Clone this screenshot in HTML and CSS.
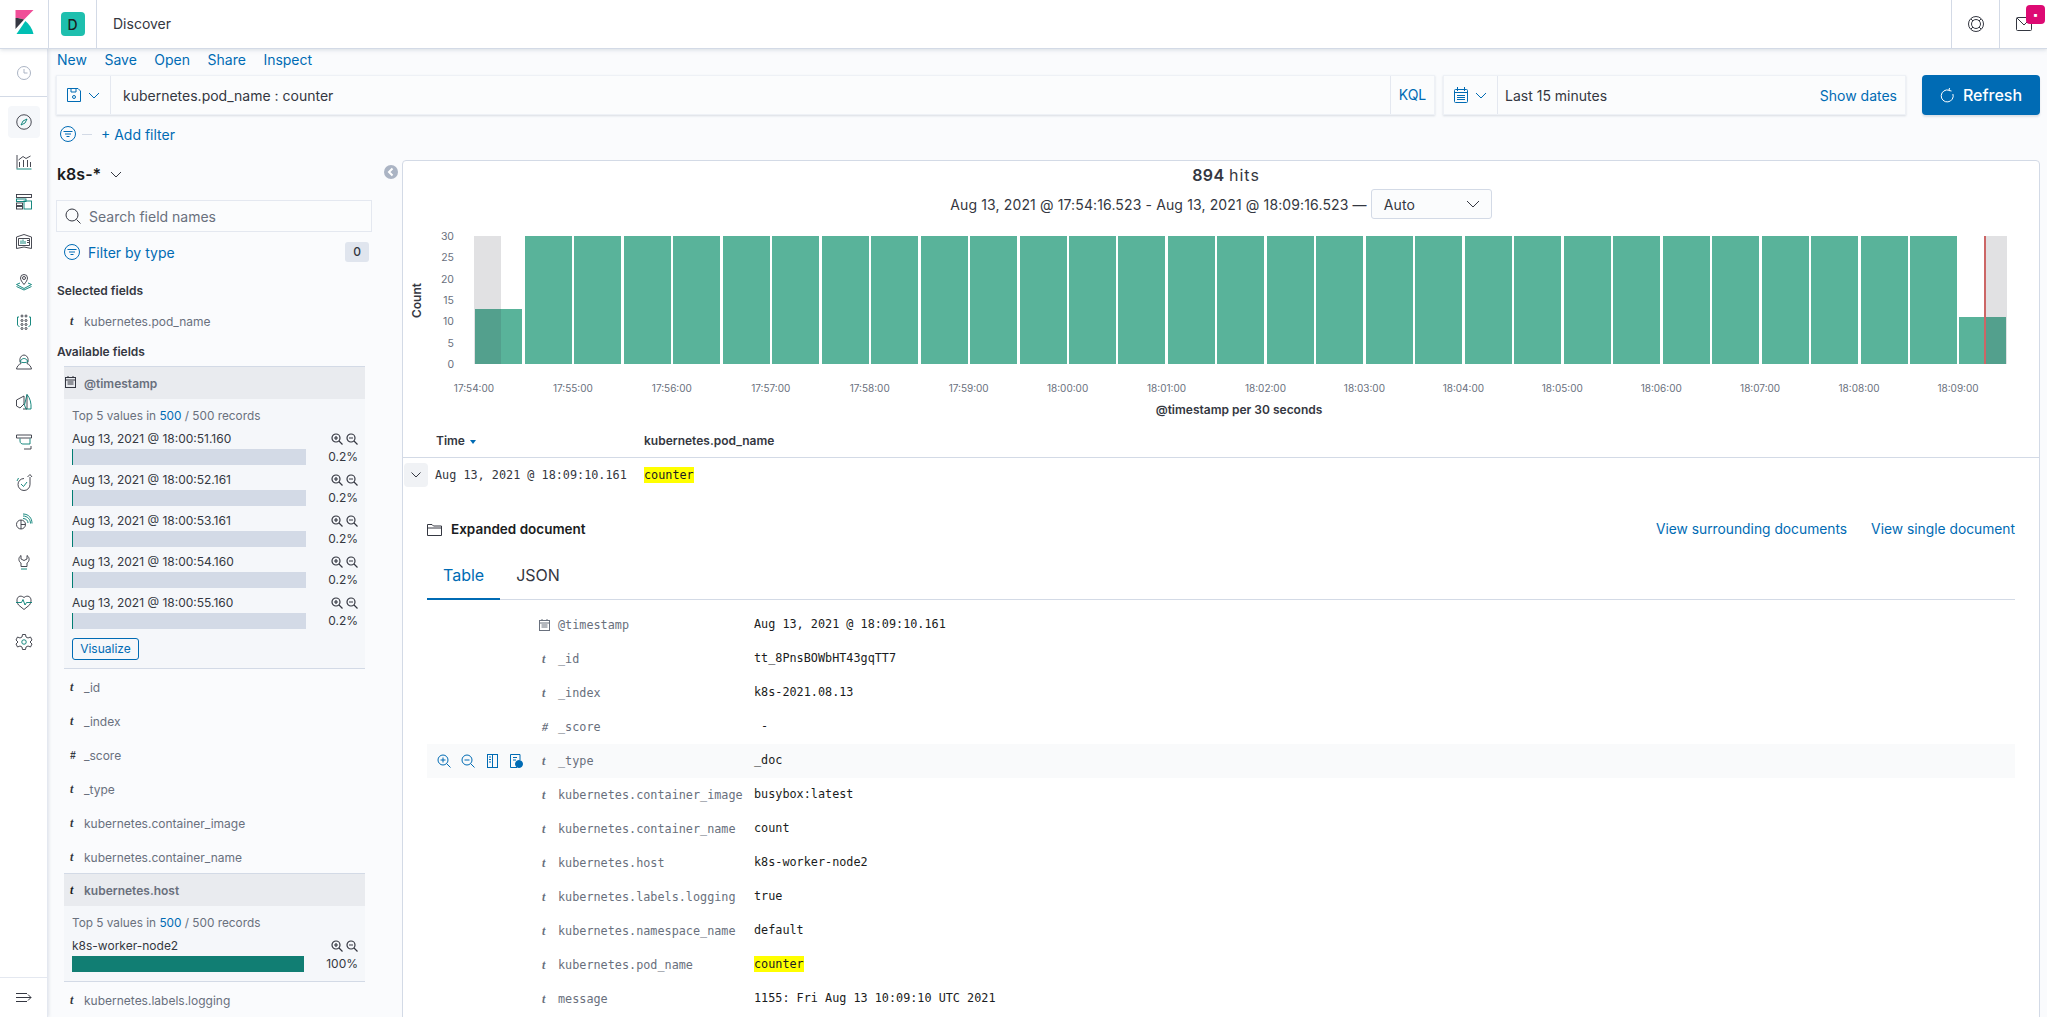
FILE: index.html
```html
<!DOCTYPE html>
<html lang="en">
<head>
<meta charset="utf-8">
<title>Discover - Kibana</title>
<link rel="stylesheet" href="styles.css">
</head>
<body>
<header class="top">
  <div class="cell logo">
    <svg width="19" height="24" viewBox="0 0 18 24"><path fill="#f04e98" d="M0 0H18L8.6 9.6C6 8.6 3 8 0 8Z"/><path fill="#343741" d="M0 8C3 8 6 8.6 8.6 9.6L0 19Z"/><path fill="#00bfb3" d="M1 24 9.9 11C13.5 14 16.8 18.5 18 24Z"/></svg>
  </div>
  <div class="cell space"><span class="avatar">D</span></div>
  <div class="crumb">Discover</div>
  <div class="cell util">
    <svg width="16" height="16" viewBox="0 0 16 16" fill="none" stroke="#343741"><circle cx="8" cy="8" r="7.500"/><circle cx="8" cy="8" r="4.500"/><path d="M3 3 5 5M13 3 11 5M3 13 5 11M13 13 11 11"/></svg>
  </div>
  <div class="cell util">
    <svg width="16" height="14" viewBox="0 0 16 14" fill="none" stroke="#343741"><rect x=".5" y=".5" width="15" height="13" rx="1"/><path d="M1 1 8 8 15 1"/></svg>
    <span class="badge">&#9642;</span>
  </div>
</header>
<div class="frame">
  <nav class="nav">
    <div class="recent">
      <svg width="16" height="16" viewBox="0 0 16 16" fill="none" stroke="#abb4c4"><circle cx="8" cy="8" r="6.500"/><path d="M8 4V8H11.500"/></svg>
    </div>
    <ul class="apps">
      <li class="active"><svg class="ai" viewBox="0 0 32 32"><circle class="d" cx="16" cy="16" r="14.500"/><path class="t" d="M22 10 18 18 10 22 14 14Z"/></svg></li>
      <li><svg class="ai" viewBox="0 0 32 32"><path class="d" d="M2 2V29"/><path class="t" d="M1 30H31"/><path class="d" d="M7 26V16M15 26V12M23 26V12M29 26V16M5 12 14 5 20 9 29 4"/></svg></li>
      <li><svg class="ai" viewBox="0 0 32 32"><rect class="d" x="1" y="1" width="30" height="6"/><rect class="t" x="1" y="10" width="19" height="5"/><rect class="t" x="16" y="14" width="15" height="16"/><rect class="d" x="1" y="18" width="12" height="5"/><rect class="d" x="1" y="25" width="12" height="5"/></svg></li>
      <li><svg class="ai" viewBox="0 0 32 32"><path class="d" d="M1 6 16 1 31 6V29L16 26 1 29ZM5 9H27V23H5Z"/><path class="t" d="M10 13V20M14 11V20M18 14V20"/><path class="d" d="M22 13H26M22 17H26"/></svg></li>
      <li><svg class="ai" viewBox="0 0 32 32"><circle class="d" cx="16" cy="8" r="3"/><path class="d" d="M16 21C12 16 9 12 9 8A7 7 0 0 1 23 8C23 12 20 16 16 21Z"/><path class="t" d="M8 18 1 21 16 29 31 21 24 18M1 25 16 32 31 25"/></svg></li>
      <li><svg class="ai" viewBox="0 0 32 32"><circle class="d" cx="12" cy="4" r="2"/><circle class="d" cx="20" cy="4" r="2"/><circle class="d" cx="12" cy="13" r="2"/><circle class="d" cx="20" cy="13" r="2"/><circle class="d" cx="12" cy="21" r="2"/><circle class="d" cx="20" cy="21" r="2"/><circle class="d" cx="12" cy="29" r="2"/><circle class="d" cx="20" cy="29" r="2"/><path class="t" d="M6 6H3V22L7 26M26 6H29V22L25 26"/></svg></li>
      <li><svg class="ai" viewBox="0 0 32 32"><path class="d" d="M10 19C6 14 7 3 16 2 25 3 26 14 22 19 27 21 30 25 31 30H1C2 25 5 21 10 19Z"/><path class="t" d="M8 15C11 10 14 9 16 9 18 9 21 10 24 15 20 18 12 18 8 15Z"/></svg></li>
      <li><svg class="ai" viewBox="0 0 32 32"><path class="d" d="M16 4 1 12 1 24 8 28 16 20ZM22 1V30H14"/><path class="t" d="M22 1C28 8 31 18 30 30H20L17 22Z"/></svg></li>
      <li><svg class="ai" viewBox="0 0 32 32"><path class="d" d="M1 2H31V8H1Z"/><path class="t" d="M8 9V14C8 19 12 20 14 20H28V9"/><path class="d" d="M16 30H30V24"/></svg></li>
      <li><svg class="ai" viewBox="0 0 32 32"><path class="d" d="M16 9A12 12 0 1 0 28 21V6M23 6 28 1 32 6"/><path class="t" d="M10 20 15 25 22 16M2 14 5 8"/></svg></li>
      <li><svg class="ai" viewBox="0 0 32 32"><circle class="d" cx="10" cy="21" r="9"/><path class="d" d="M10 12V30M10 21H19"/><path class="t" d="M14 9C20 9 24 13 24 18M14 4C23 4 29 11 29 19M14 0C26 0 32 9 32 19"/></svg></li>
      <li><svg class="ai" viewBox="0 0 32 32"><path class="d" d="M10 3C3 8 6 16 10 18V25H22V18C26 16 29 8 22 3V10L16 13 10 10Z"/><path class="t" d="M10 30H22"/></svg></li>
      <li><svg class="ai" viewBox="0 0 32 32"><path class="d" d="M5 22C-3 10 6-1 16 7 26-1 35 10 27 22L16 31Z"/><path class="t" d="M0 17H11L14 11 18 22 21 17H32"/></svg></li>
      <li><svg class="ai" viewBox="0 0 32 32"><path class="d" d="M13 1H19L20 6 24 8 29 6 32 12 28 16 32 20 29 26 24 24 20 26 19 31H13L12 26 8 24 3 26 0 20 4 16 0 12 3 6 8 8 12 6Z"/><circle class="t" cx="16" cy="16" r="4.500"/></svg></li>
    </ul>
    <div class="collapse-nav">
      <svg width="16" height="11" viewBox="0 0 16 11" fill="none" stroke="#343741"><path d="M0 1.500H11M0 5.500H15M0 9.500H11M12 2.500 15 5.500 12 8.500"/></svg>
    </div>
  </nav>
  <main class="content">
    <div class="menu"><a>New</a><a>Save</a><a>Open</a><a>Share</a><a>Inspect</a></div>
    <div class="querybar">
      <div class="box query">
        <span class="prefix">
          <svg width="14" height="14" viewBox="0 0 14 14" fill="none" stroke="#006bb4"><path d="M.5.5H11L13.500 3V13.500H.5ZM4 .5V4H9V.5"/><circle cx="7" cy="9" r="1.500"/></svg>
          <svg class="chev" width="12" height="7" viewBox="0 0 12 7" fill="none" stroke="#006bb4"><path d="M1 1 6 6 11 1"/></svg>
        </span>
        <span class="qtext">kubernetes.pod_name : counter</span>
        <span class="kql">KQL</span>
      </div>
      <div class="box dates">
        <span class="prefix cal">
          <svg width="14" height="16" viewBox="0 0 14 16" fill="none" stroke="#006bb4"><rect x=".5" y="2.500" width="13" height="13" rx="1"/><path d="M3.500 0V4M10.500 0V4M.5 5.500H13.500M3 8.500H11M3 10.500H11M3 12.500H11" /></svg>
          <svg class="chev" width="12" height="7" viewBox="0 0 12 7" fill="none" stroke="#006bb4"><path d="M1 1 6 6 11 1"/></svg>
        </span>
        <span class="range">Last 15 minutes</span>
        <a class="showdates">Show dates</a>
      </div>
      <button class="refresh">
        <svg width="14" height="16" viewBox="0 0 14 16" fill="none" stroke="#fff"><path d="M9 3.200A6 6 0 1 0 12.900 7M9.500 1 9 3.500 11.500 4"/></svg>
        Refresh
      </button>
    </div>
    <div class="filterbar">
      <svg width="16" height="16" viewBox="0 0 16 16" fill="none" stroke="#006bb4"><circle cx="8" cy="8" r="7.500"/><path d="M3.500 5.500H12.500M5 8H11M6.500 10.500H9.500"/></svg>
      <span class="dash"></span>
      <a class="addfilter">+ Add filter</a>
    </div>
    <div class="split">
      <aside class="side">
        <div class="pattern">k8s-*
          <svg width="12" height="7" viewBox="0 0 12 7" fill="none" stroke="#343741"><path d="M1 1 6 6 11 1"/></svg>
        </div>
        <div class="search">
          <svg width="16" height="16" viewBox="0 0 16 16" fill="none" stroke="#343741"><circle cx="7" cy="7" r="6"/><path d="M11.500 11.500 15.500 15.500"/></svg>
          <span>Search field names</span>
        </div>
        <div class="bytype">
          <svg width="16" height="16" viewBox="0 0 16 16" fill="none" stroke="#006bb4"><circle cx="8" cy="8" r="7.500"/><path d="M3.500 5.500H12.500M5 8H11M6.500 10.500H9.500"/></svg>
          <a>Filter by type</a>
          <span class="count">0</span>
        </div>
        <h4 class="group first">Selected fields</h4>
        <div class="field"><i class="ty">t</i>kubernetes.pod_name</div>
        <h4 class="group">Available fields</h4>
        <div class="fields">
          <div class="field head">
            <svg class="ty-svg" width="11" height="12" viewBox="0 0 11 12" fill="none" stroke="#343741"><rect x=".5" y="1.500" width="10" height="10"/><path d="M3 0V2M8 0V2M.5 4H10.500M2.500 6H8.500M2.500 8H8.500"/></svg>
            @timestamp
          </div>
          <div class="details">
            <p class="top5">Top 5 values in <b>500</b> / 500 records</p>
            <div class="val">
              <div class="val-main"><div class="val-label">Aug 13, 2021 @ 18:00:51.160</div><div class="track"><div class="fill sliver"></div></div></div>
              <div class="val-side"><span class="zooms"><svg class="z" viewBox="0 0 12 12"><circle cx="5" cy="5" r="4"/><path d="M8 8 11.500 11.500M3 5H7M5 3V7"/></svg><svg class="z" viewBox="0 0 12 12"><circle cx="5" cy="5" r="4"/><path d="M8 8 11.500 11.500M3 5H7"/></svg></span><span class="pct">0.2%</span></div>
            </div>
            <div class="val">
              <div class="val-main"><div class="val-label">Aug 13, 2021 @ 18:00:52.161</div><div class="track"><div class="fill sliver"></div></div></div>
              <div class="val-side"><span class="zooms"><svg class="z" viewBox="0 0 12 12"><circle cx="5" cy="5" r="4"/><path d="M8 8 11.500 11.500M3 5H7M5 3V7"/></svg><svg class="z" viewBox="0 0 12 12"><circle cx="5" cy="5" r="4"/><path d="M8 8 11.500 11.500M3 5H7"/></svg></span><span class="pct">0.2%</span></div>
            </div>
            <div class="val">
              <div class="val-main"><div class="val-label">Aug 13, 2021 @ 18:00:53.161</div><div class="track"><div class="fill sliver"></div></div></div>
              <div class="val-side"><span class="zooms"><svg class="z" viewBox="0 0 12 12"><circle cx="5" cy="5" r="4"/><path d="M8 8 11.500 11.500M3 5H7M5 3V7"/></svg><svg class="z" viewBox="0 0 12 12"><circle cx="5" cy="5" r="4"/><path d="M8 8 11.500 11.500M3 5H7"/></svg></span><span class="pct">0.2%</span></div>
            </div>
            <div class="val">
              <div class="val-main"><div class="val-label">Aug 13, 2021 @ 18:00:54.160</div><div class="track"><div class="fill sliver"></div></div></div>
              <div class="val-side"><span class="zooms"><svg class="z" viewBox="0 0 12 12"><circle cx="5" cy="5" r="4"/><path d="M8 8 11.500 11.500M3 5H7M5 3V7"/></svg><svg class="z" viewBox="0 0 12 12"><circle cx="5" cy="5" r="4"/><path d="M8 8 11.500 11.500M3 5H7"/></svg></span><span class="pct">0.2%</span></div>
            </div>
            <div class="val">
              <div class="val-main"><div class="val-label">Aug 13, 2021 @ 18:00:55.160</div><div class="track"><div class="fill sliver"></div></div></div>
              <div class="val-side"><span class="zooms"><svg class="z" viewBox="0 0 12 12"><circle cx="5" cy="5" r="4"/><path d="M8 8 11.500 11.500M3 5H7M5 3V7"/></svg><svg class="z" viewBox="0 0 12 12"><circle cx="5" cy="5" r="4"/><path d="M8 8 11.500 11.500M3 5H7"/></svg></span><span class="pct">0.2%</span></div>
            </div>
            <a class="visualize">Visualize</a>
          </div>
          <div class="field"><i class="ty">t</i>_id</div>
          <div class="field"><i class="ty">t</i>_index</div>
          <div class="field"><i class="ty hash">#</i>_score</div>
          <div class="field"><i class="ty">t</i>_type</div>
          <div class="field"><i class="ty">t</i>kubernetes.container_image</div>
          <div class="field"><i class="ty">t</i>kubernetes.container_name</div>
          <div class="field head second"><i class="ty">t</i>kubernetes.host</div>
          <div class="details short">
            <p class="top5">Top 5 values in <b>500</b> / 500 records</p>
            <div class="val">
              <div class="val-main"><div class="val-label">k8s-worker-node2</div><div class="track full"></div></div>
              <div class="val-side"><span class="zooms"><svg class="z" viewBox="0 0 12 12"><circle cx="5" cy="5" r="4"/><path d="M8 8 11.500 11.500M3 5H7M5 3V7"/></svg><svg class="z" viewBox="0 0 12 12"><circle cx="5" cy="5" r="4"/><path d="M8 8 11.500 11.500M3 5H7"/></svg></span><span class="pct">100%</span></div>
            </div>
          </div>
          <div class="field"><i class="ty">t</i>kubernetes.labels.logging</div>
        </div>
      </aside>
      <div class="gutter">
        <svg width="14" height="14" viewBox="0 0 14 14"><circle cx="7" cy="7" r="7" fill="#abb4c4"/><path d="M8.500 3.500 5 7 8.500 10.500" fill="none" stroke="#fff" stroke-width="2"/></svg>
      </div>
      <section class="panel">
        <div class="hits"><b>894</b> <span class="hits-word">hits</span></div>
        <div class="rangeline">
          <span>Aug 13, 2021 @ 17:54:16.523 - Aug 13, 2021 @ 18:09:16.523 &mdash;</span>
          <span class="auto">Auto
            <svg width="14" height="8" viewBox="0 0 14 8" fill="none" stroke="#343741"><path d="M1 1 7 7 13 1"/></svg>
          </span>
        </div>
        <div class="chart">
          <div class="count-label"><span>Count</span></div>
          <div class="yaxis"><span>30</span><span>25</span><span>20</span><span>15</span><span>10</span><span>5</span><span>0</span></div>
          <div class="plot">
            <div class="bar low13"></div>
            <div class="bar"></div><div class="bar"></div><div class="bar"></div><div class="bar"></div><div class="bar"></div>
            <div class="bar"></div><div class="bar"></div><div class="bar"></div><div class="bar"></div><div class="bar"></div>
            <div class="bar"></div><div class="bar"></div><div class="bar"></div><div class="bar"></div><div class="bar"></div>
            <div class="bar"></div><div class="bar"></div><div class="bar"></div><div class="bar"></div><div class="bar"></div>
            <div class="bar"></div><div class="bar"></div><div class="bar"></div><div class="bar"></div><div class="bar"></div>
            <div class="bar"></div><div class="bar"></div><div class="bar"></div><div class="bar"></div>
            <div class="bar low11"></div>
            <div class="shade left"></div>
            <div class="shade right"></div>
            <div class="now"></div>
          </div>
        </div>
        <div class="xaxis"><span>17:54:00</span><span>17:55:00</span><span>17:56:00</span><span>17:57:00</span><span>17:58:00</span><span>17:59:00</span><span>18:00:00</span><span>18:01:00</span><span>18:02:00</span><span>18:03:00</span><span>18:04:00</span><span>18:05:00</span><span>18:06:00</span><span>18:07:00</span><span>18:08:00</span><span>18:09:00</span></div>
        <div class="xtitle">@timestamp per 30 seconds</div>
        <div class="thead"><span class="th-time">Time <i class="sort"></i></span><span>kubernetes.pod_name</span></div>
        <div class="trow">
          <span class="expander"><svg width="10" height="6" viewBox="0 0 10 6" fill="none" stroke="#343741"><path d="M.5.5 5 5 9.500.5"/></svg></span>
          <span class="tcell-time">Aug 13, 2021 @ 18:09:10.161</span>
          <mark>counter</mark>
        </div>
        <div class="doc">
          <div class="dochead">
            <svg width="15" height="13" viewBox="0 0 15 13" fill="none" stroke="#343741"><path d="M.5 12.500V1.500H5L6.500 3H14.500V12.500ZM.5 5H14.500"/></svg>
            <b>Expanded document</b>
            <span class="doclinks"><a>View surrounding documents</a><a>View single document</a></span>
          </div>
          <div class="tabs"><span class="tab on">Table</span><span class="tab">JSON</span></div>
          <div class="rows">
            <div class="drow"><span class="acts"></span><span class="dty"><svg width="11" height="12" viewBox="0 0 11 12" fill="none" stroke="#69707d"><rect x=".5" y="1.500" width="10" height="10"/><path d="M3 0V2M8 0V2M.5 4H10.500M2.500 6H8.500M2.500 8H8.500"/></svg></span><span class="dname">@timestamp</span><span class="dval">Aug 13, 2021 @ 18:09:10.161</span></div>
            <div class="drow"><span class="acts"></span><span class="dty"><i>t</i></span><span class="dname">_id</span><span class="dval">tt_8PnsBOWbHT43gqTT7</span></div>
            <div class="drow"><span class="acts"></span><span class="dty"><i>t</i></span><span class="dname">_index</span><span class="dval">k8s-2021.08.13</span></div>
            <div class="drow"><span class="acts"></span><span class="dty"><i>#</i></span><span class="dname">_score</span><span class="dval">&nbsp;-</span></div>
            <div class="drow hover">
              <span class="acts">
                <svg class="ba" viewBox="0 0 14 14"><circle cx="6" cy="6" r="5"/><path d="M9.500 9.500 13.500 13.500M3.500 6H8.500M6 3.500V8.500"/></svg>
                <svg class="ba" viewBox="0 0 14 14"><circle cx="6" cy="6" r="5"/><path d="M9.500 9.500 13.500 13.500M3.500 6H8.500"/></svg>
                <svg class="ba" viewBox="0 0 14 14"><rect x="2.500" y=".5" width="10" height="13"/><path d="M7.500.5V13.500M4 3H6M4 5.500H6M4 8H6"/></svg>
                <svg class="ba" viewBox="0 0 14 14"><path d="M8 13.500H1.500V.5H11V6M4 3.500H8M4 6H7"/><circle class="solid" cx="10" cy="10" r="3.500"/></svg>
              </span>
              <span class="dty"><i>t</i></span><span class="dname">_type</span><span class="dval">_doc</span>
            </div>
            <div class="drow"><span class="acts"></span><span class="dty"><i>t</i></span><span class="dname">kubernetes.container_image</span><span class="dval">busybox:latest</span></div>
            <div class="drow"><span class="acts"></span><span class="dty"><i>t</i></span><span class="dname">kubernetes.container_name</span><span class="dval">count</span></div>
            <div class="drow"><span class="acts"></span><span class="dty"><i>t</i></span><span class="dname">kubernetes.host</span><span class="dval">k8s-worker-node2</span></div>
            <div class="drow"><span class="acts"></span><span class="dty"><i>t</i></span><span class="dname">kubernetes.labels.logging</span><span class="dval">true</span></div>
            <div class="drow"><span class="acts"></span><span class="dty"><i>t</i></span><span class="dname">kubernetes.namespace_name</span><span class="dval">default</span></div>
            <div class="drow"><span class="acts"></span><span class="dty"><i>t</i></span><span class="dname">kubernetes.pod_name</span><span class="dval"><mark>counter</mark></span></div>
            <div class="drow"><span class="acts"></span><span class="dty"><i>t</i></span><span class="dname">message</span><span class="dval">1155: Fri Aug 13 10:09:10 UTC 2021</span></div>
          </div>
        </div>
      </section>
    </div>
  </main>
</div>
</body>
</html>
```
FILE: styles.css
```css
* { box-sizing: border-box; }
html, body { margin: 0; height: 1017px; overflow: hidden; }
body { font-family: Inter, "Liberation Sans", sans-serif; font-size: 14px; color: #343741; background: #fafbfd; }
a { color: #006bb4; }

.top { height: 49px; background: #fff; border-bottom: 1px solid #d3dae6; box-shadow: 0 1px 4px rgba(152,162,179,.35); display: flex; position: relative; z-index: 3; }
.cell { height: 48px; display: flex; align-items: center; justify-content: center; position: relative; }
.logo { width: 48px; margin-top: -2px; }
.space { width: 49px; border-left: 1px solid #d3dae6; border-right: 1px solid #d3dae6; }
.avatar { width: 24px; height: 24px; border-radius: 4px; background: #1ebfae; color: #1a1c21; font-size: 14px; font-weight: 500; display: flex; align-items: center; justify-content: center; }
.crumb { flex: 1; padding-left: 16px; line-height: 48px; font-size: 14px; }
.util { width: 48px; border-left: 1px solid #d3dae6; }
.badge { position: absolute; right: 2px; top: 5px; width: 19px; height: 19px; border-radius: 4px; background: #dd0a73; color: #fff; font-size: 10px; line-height: 19px; text-align: center; }

.frame { display: flex; height: 968px; }
.nav { width: 48px; flex: none; background: #fff; border-right: 1px solid #e4e8f0; box-shadow: 1px 0 3px rgba(152,162,179,.25); display: flex; flex-direction: column; position: relative; z-index: 2; }
.recent { height: 48px; display: flex; align-items: center; justify-content: center; border-bottom: 1px solid #d3dae6; }
.apps { list-style: none; margin: 9px 0 0; padding: 0; flex: 1; }
.apps li { height: 32px; width: 32px; margin: 0 0 8px 8px; display: flex; align-items: center; justify-content: center; border-radius: 4px; }
.apps li.active { background: #f5f7fa; }
.ai { width: 16px; height: 16px; fill: none; stroke-width: 1.800; overflow: visible; }
.ai .d { stroke: #343741; }
.ai .t { stroke: #017d73; }
.collapse-nav { height: 40px; display: flex; align-items: center; justify-content: center; border-top: 1px solid #e4e8f0; }

.content { flex: 1; min-width: 0; display: flex; flex-direction: column; }
.menu { height: 20px; padding-left: 9px; display: flex; gap: 17.500px; align-items: center; font-size: 14px; color: #006bb4; }
.querybar { height: 40px; margin-top: 6px; padding: 0 7px 0 8px; display: flex; }
.box { height: 40px; display: flex; align-items: center; background: #fbfcfd; border: 1px solid #eef1f6; box-shadow: 0 1px 2px rgba(152,162,179,.35); }
.query { flex: 1; }
.prefix { width: 54px; height: 100%; display: flex; align-items: center; gap: 7px; padding-left: 10px; border-right: 1px solid #e4e8f0; flex: none; }
.chev { flex: none; }
.qtext { flex: 1; padding-left: 12px; }
.kql { width: 44px; height: 100%; line-height: 38px; text-align: center; color: #006bb4; border-left: 1px solid #e4e8f0; }
.dates { width: 463px; margin-left: 8px; }
.cal { width: 54px; padding-left: 10px; }
.range { flex: 1; padding-left: 7px; }
.showdates { padding-right: 8px; }
.refresh { width: 118px; height: 40px; margin-left: 16px; background: #006bb4; border: 0; border-radius: 4px; color: #fff; font: 500 16px Inter, sans-serif; display: flex; align-items: center; justify-content: center; gap: 9px; box-shadow: 0 2px 2px rgba(152,162,179,.3); }
.filterbar { height: 40px; padding: 0 0 2px 12px; display: flex; align-items: center; }
.dash { width: 10px; height: 1px; background: #d3dae6; margin: 0 9px 0 6px; }
.addfilter { font-size: 14px; }

.split { flex: 1; display: flex; min-height: 0; }
.side { width: 325px; flex: none; padding-left: 8px; overflow: hidden; }
.pattern { height: 38px; margin-left: 1px; font-size: 16px; font-weight: 600; color: #1a1c21; display: flex; align-items: center; gap: 9px; }
.search { width: 316px; height: 32px; margin-top: 7px; padding-left: 8px; background: #fbfcfd; border: 1px solid #e4e8f0; display: flex; align-items: center; gap: 8px; color: #69707d; }
.bytype { width: 316px; height: 40px; padding: 0 3px 0 8px; display: flex; align-items: center; gap: 8px; }
.count { margin-left: auto; width: 24px; height: 20px; background: #e0e5ee; border-radius: 3px; font-size: 12px; font-weight: 500; text-align: center; line-height: 20px; }
.group { margin: 4px 0 0 1px; height: 20px; line-height: 20px; font-size: 12px; font-weight: 600; }
.group.first { margin-top: 9px; }
.field { width: 301px; height: 34px; display: flex; align-items: center; font-size: 12px; color: #69707d; padding-left: 5px; }
.side > .field { margin: 3px 0 0 8px; }
.fields { margin: 4px 0 0 8px; }
.ty { width: 15px; flex: none; font: italic bold 12px "Liberation Serif", serif; color: #343741; padding-left: 1px; }
.hash { font: italic bold 10px "Liberation Sans", sans-serif; }
.ty-svg { margin-right: 8px; margin-left: -4px; margin-top: -2px; }
.head { height: 33px; background: #e9ebef; border-top: 1px solid #d3dae6; font-weight: 600; }
.head .ty { color: #1a1c21; }
.second { margin-top: -1px; }
.details { width: 301px; padding: 8px; border-bottom: 1px solid #d3dae6; margin-bottom: 1px; background: #f5f7fa; font-size: 12px; }
.short { padding-bottom: 10px; }
.top5 { margin: 0 0 -2px; line-height: 18px; font-size: 11.800px; color: #69707d; }
.top5 b { font-weight: 400; color: #006bb4; }
.val { display: flex; height: 41px; width: 286px; justify-content: space-between; padding-top: 8px; }
.val-main { width: 234px; }
.val-label { line-height: 16px; }
.track { height: 16px; margin-top: 2px; background: #d3dae6; }
.sliver { width: 1px; height: 16px; background: #017d73; }
.fill { display: block; }
.track.full { width: 232px; background: #117e73; }
.val-side { display: flex; flex-direction: column; align-items: flex-end; }
.pct { flex: none; line-height: 20px; color: #343741; }
.zooms { display: flex; flex: none; gap: 3px; height: 16px; align-items: center; }
.z { width: 12px; height: 12px; fill: none; stroke: #343741; stroke-width: 1.200; }
.visualize { display: block; width: 67px; height: 22px; margin-top: 10px; line-height: 20px; text-align: center; border: 1px solid #006bb4; border-radius: 3px; }

.gutter { width: 29px; flex: none; padding: 10px 0 0 11px; }
.panel { flex: 1; min-width: 0; height: 860px; margin: 5px 7px 0 0; background: #fff; border: 1px solid #d3dae6; border-radius: 4px 4px 0 0; overflow: hidden; }
.hits { height: 28px; padding-left: 10px; line-height: 28px; text-align: center; font-size: 16px; }
.hits b { font-weight: 600; letter-spacing: .4px; }
.hits-word { letter-spacing: 1px; }
.rangeline { height: 30px; display: flex; align-items: center; justify-content: center; gap: 4px; font-size: 14px; letter-spacing: .13px; }
.auto { width: 121px; height: 30px; padding: 0 11px 0 12px; background: #fbfcfd; border: 1px solid #d3dae6; border-radius: 3px; display: flex; align-items: center; justify-content: space-between; }
.chart { height: 145px; padding-top: 17px; padding-left: 6px; display: flex; }
.count-label { width: 15px; height: 128px; display: flex; align-items: center; justify-content: center; }
.count-label span { transform: rotate(-90deg); font-size: 12px; font-weight: 600; white-space: nowrap; }
.yaxis { width: 30px; height: 140px; margin-top: -5px; display: flex; flex-direction: column; justify-content: space-between; align-items: flex-end; font-size: 10.500px; line-height: 12px; color: #69707d; }
.plot { width: 1531px; height: 128px; margin-left: 21.400px; display: flex; gap: 2.470px; align-items: flex-end; position: relative; }
.bar { flex: 1; height: 128px; background: #59b39a; }
.low13 { height: 55px; }
.low11 { height: 47px; }
.shade { position: absolute; top: 0; bottom: 0; background: rgba(52,55,65,.15); }
.shade.left { left: -1px; width: 27px; }
.shade.right { right: -1px; width: 22px; }
.now { position: absolute; top: 0; bottom: 0; left: 1509px; width: 2px; background: #c66; }
.xaxis { display: flex; margin: 18px 0 0 21.500px; font-size: 10px; line-height: 12px; color: #69707d; }
.xaxis span { width: 98.940px; text-align: center; flex: none; }
.xtitle { margin-top: 10px; height: 12px; line-height: 12px; text-align: center; font-size: 12px; font-weight: 600; padding-left: 36px; }
.thead { height: 42px; padding: 17px 0 0 33px; display: flex; border-bottom: 1px solid #d3dae6; font-size: 12px; font-weight: 600; line-height: 16px; }
.th-time { width: 208px; }
.sort { display: inline-block; margin-left: 2px; vertical-align: middle; border: 3px solid transparent; border-top: 4px solid #006bb4; border-bottom: 0; }
.trow { height: 34px; display: flex; align-items: center; padding-left: 1px; font-family: "DejaVu Sans Mono", monospace; font-size: 11.800px; }
.expander { width: 24px; height: 24px; background: #f0f2f5; border-radius: 4px; display: flex; align-items: center; justify-content: center; flex: none; }
.tcell-time { width: 216px; padding-left: 7px; flex: none; }
mark { background: #ff0; color: #1a1c21; padding: 1px 0; }
.doc { padding: 27px 24px 0; }
.dochead { height: 20px; display: flex; align-items: center; font-size: 13.500px; gap: 9px; }
.dochead b { font-weight: 600; color: #1a1c21; }
.doclinks { margin-left: auto; display: flex; gap: 24px; font-size: 13.800px; font-weight: 400; }
.tabs { height: 61px; padding-top: 13px; display: flex; border-bottom: 1px solid #d3dae6; font-size: 16px; }
.tab { height: 48px; line-height: 46px; padding: 0 16px; }
.tab.on { color: #006bb4; border-bottom: 2px solid #006bb4; margin-bottom: -1px; }
.rows { margin-top: 8px; font-family: "DejaVu Sans Mono", monospace; font-size: 11.800px; }
.drow { height: 34px; display: flex; align-items: center; }
.hover { background: #f9fafb; }
.acts { width: 110px; padding-left: 10px; display: flex; gap: 10px; flex: none; }
.ba { width: 14px; height: 14px; fill: none; stroke: #006bb4; }
.ba .solid { fill: #006bb4; }
.dty { width: 21px; flex: none; padding-left: 2px; color: #69707d; display: flex; }
.dty i { font: italic bold 12px "Liberation Serif", serif; padding-left: 3px; }
.dname { width: 196px; flex: none; color: #69707d; white-space: nowrap; }
.dval { color: #1a1c21; margin-top: -2px; }
```
